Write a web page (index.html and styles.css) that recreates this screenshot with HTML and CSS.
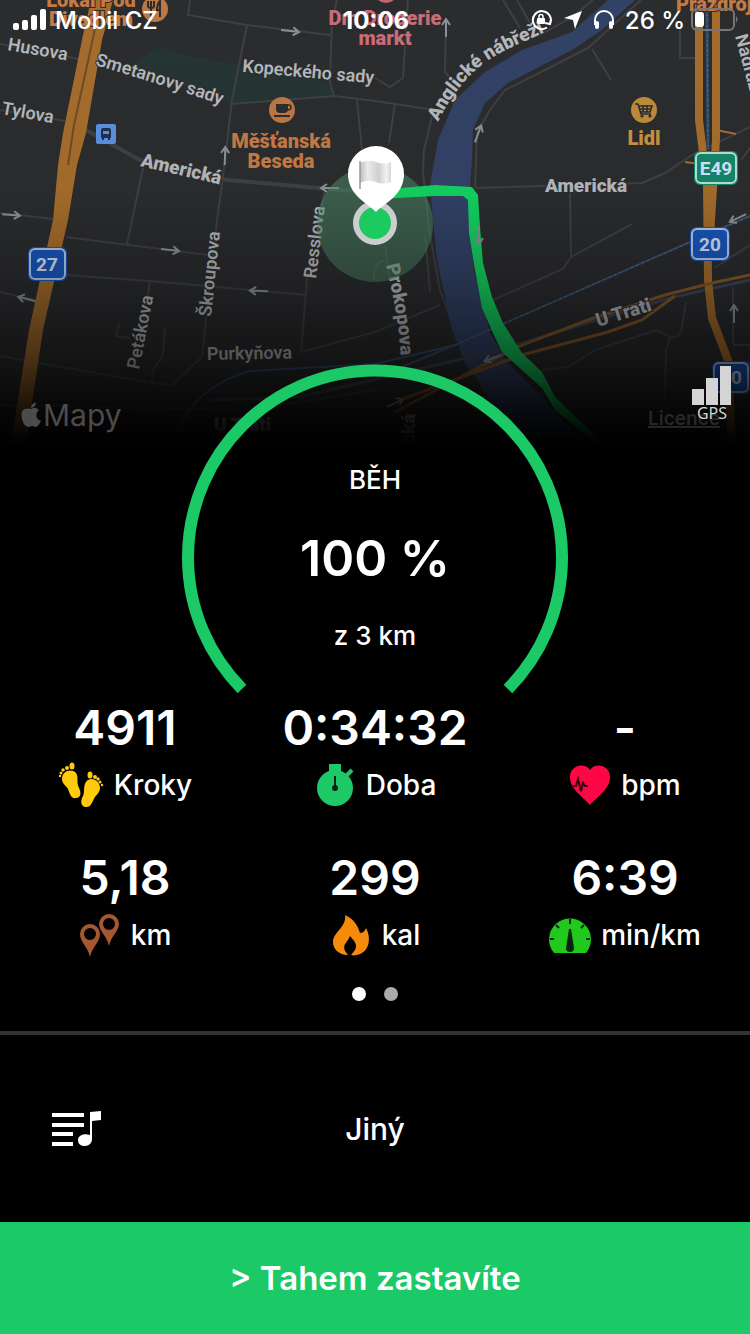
FILE: index.html
```html
<!DOCTYPE html>
<html lang="cs">
<head>
    <meta charset="utf-8">
    <meta name="viewport" content="width=device-width, initial-scale=1">
    <title>Běh</title>
    <link rel="stylesheet" href="styles.css">
</head>
<body>
    <div class="app">
        <section class="hero">
            <svg class="map" viewBox="0 0 750 450" preserveAspectRatio="xMidYMin slice" role="img" aria-label="Mapa trasy">
                <defs>
                    <linearGradient id="fade" x1="0" y1="0" x2="0" y2="1">
                        <stop offset="0" stop-color="#000" stop-opacity="0"/>
                        <stop offset="0.43" stop-color="#000" stop-opacity="0.03"/>
                        <stop offset="0.62" stop-color="#000" stop-opacity="0.24"/>
                        <stop offset="0.8" stop-color="#000" stop-opacity="0.56"/>
                        <stop offset="0.91" stop-color="#000" stop-opacity="0.84"/>
                        <stop offset="0.99" stop-color="#000"/>
                    </linearGradient>
                    <linearGradient id="flag" x1="0" y1="0" x2="1" y2="0">
                        <stop offset="0" stop-color="#bdbdbd"/>
                        <stop offset="0.25" stop-color="#ececec"/>
                        <stop offset="0.6" stop-color="#cfcfcf"/>
                        <stop offset="0.85" stop-color="#f2f2f2"/>
                        <stop offset="1" stop-color="#d5d5d5"/>
                    </linearGradient>
                    <path id="smetanovy" d="M95 65 Q160 84 240 111"/>
                    <path id="anglicke" d="M438 122 C455 88 475 66 502 52 C522 42 540 35 570 20"/>
                    <path id="prokopova" d="M386 265 C394 300 401 330 401 375"/>
                    <g id="arrow" fill="none" stroke="#8b9196" stroke-width="2">
                        <path d="M-9 0 H8 M3 -4 L9 0 L3 4"/>
                    </g>
                </defs>
                <rect width="750" height="450" fill="#2b2c2e"/>

                <!-- park -->
                <path fill="#253533" d="M130 66 L158 47 L190 56 L245 66 L330 82 L334 96 L280 99 L232 104 Z"/>

                <!-- streets -->
                <g class="streets">
                    <path d="M0 44 L84 60 M0 110 L65 121 M190 0 L188 15 L247 25 L330 35 M337 0 L332 20 L330 82 L334 96"/>
                    <path d="M247 25 L232 100 L222 185 L217 220 L202 357 L172 385 L152 383 L0 356"/>
                    <path d="M230 104 L334 96 L375 101 L428 109 M357 100 L362 150 M395 103 L389 143"/>
                    <path d="M143 168 L127 244 M0 213 L53 219 M66 237 L208 255 M66 275 L150 281 L307 295 M0 292 L35 300"/>
                    <path d="M325 190 L307 280 L301 352 L375 332 L440 305 M150 281 L144 320"/>
                    <path d="M119 323 L116 336 L130 338 M165 328 L163 355 L153 370 L152 384"/>
                    <path d="M503 0 L520 28 M517 0 L530 23 M593 0 L572 17 L540 35 M408 0 L403 78 L390 87 L375 78 M446 20 L445 72 L455 83"/>
                    <path d="M641 0 L588 48 L545 70 L505 90 L490 110 L477 133 L475 187 M592 49 L611 80 M680 30 L680 58 L695 58"/>
                    <path d="M432 117 L424 150 L423 173 L430 235 L440 290 L460 345 L485 392 M385 245 L390 280 M374 280 Q373 262 385 260 M425 235 L430 292"/>
                    <path d="M475 188 L642 183 L665 173 L692 155 L750 127 M570 192 L571 257 L563 269 L493 300 M571 257 L632 224"/>
                    <path d="M542 370 L568 367 L595 350 L657 330 L670 337 Q682 340 683 320 L686 302 M670 337 L666 350 L665 400 M733 287 L733 345 M733 345 L750 345"/>
                    <path d="M0 405 L250 410 L375 390 M714 268 L750 245 M750 148 L741 160"/>
                </g>
                <path class="avenue" d="M86 130 L140 160 L228 180 L340 190 L400 192"/>

                <!-- river -->
                <path fill="#324266" d="M608 0 L572 32 L522 50 L485 72 L455 100 L438 140 L430 185 L433 220 L437 260 L452 330 L465 363 L485 390 L518 450 L600 450 L575 433 L542 397 L508 363 L490 333 L474 270 L470 187 L472 160 L473 130 L485 103 L508 83 L572 50 L602 30 L635 0 Z"/>

                <!-- railway -->
                <g fill="none" stroke="#36506f" stroke-width="2">
                    <path d="M180 425 Q200 385 250 371 L375 364 L455 345 L690 242 L750 216"/>
                    <path d="M375 378 L455 345"/>
                    <path stroke="#3c4656" stroke-width="3" d="M210 400 L300 397 L500 350 L590 322 L670 298 L750 280"/>
                    <path stroke="#536f91" stroke-width="1" stroke-dasharray="2 4" d="M455 345 L690 242 L750 216"/>
                </g>

                <!-- main roads -->
                <path fill="#a56d2c" d="M91 0 L113 0 L102 40 L86 133 L77 165 L68 220 L43 330 L25 450 L10 450 L29 330 L53 220 L58 165 L63 133 L83 35 Z"/>
                <path class="road-gap" d="M97 20 L74 125 L68 165"/>
                <g fill="none" stroke="#a56d2c">
                    <path stroke-width="8" d="M699 0 L699 120 L707 185 L708 280 L712 318 L728 360 L732 450"/>
                    <path stroke-width="8" d="M716 0 L716 140 L711 220 L709 260"/>
                    <path stroke-width="2" d="M716 130 L736 134 M685 162 L700 164"/>
                    <path stroke="#87592a" stroke-width="3" d="M395 412 L517 347 L588 320 L665 295 L712 283 L750 275 M400 400 L522 355 L608 332 L642 320 L675 296"/>
                </g>
                <path fill="none" stroke="#344d6b" stroke-width="3" d="M707 10 L708 150"/>
                <path fill="none" stroke="#6483a0" stroke-width="1" stroke-dasharray="1 4" d="M707 10 L708 150"/>

                <!-- one-way arrows -->
                <use href="#arrow" transform="translate(290 31) rotate(6)"/>
                <use href="#arrow" transform="translate(11 215) rotate(4)"/>
                <use href="#arrow" transform="translate(170 250) rotate(6)"/>
                <use href="#arrow" transform="translate(259 291) rotate(182)"/>
                <use href="#arrow" transform="translate(27 299) rotate(194)"/>
                <use href="#arrow" transform="translate(225 156) rotate(-88)"/>
                <use href="#arrow" transform="translate(330 188) rotate(180)"/>
                <use href="#arrow" transform="translate(478 134) rotate(-70)"/>
                <use href="#arrow" transform="translate(446 28) rotate(-90)"/>
                <use href="#arrow" transform="translate(493 358) rotate(160)"/>
                <use href="#arrow" transform="translate(734 314) rotate(-90)"/>
                <use href="#arrow" transform="translate(738 218) rotate(155)"/>
                <use href="#arrow" transform="translate(395 403) rotate(-25)"/>

                <!-- street names -->
                <g class="street-name">
                    <text transform="translate(7 50) rotate(10)">Husova</text>
                    <text transform="translate(1 114) rotate(10)">Tylova</text>
                    <text><textPath href="#smetanovy">Smetanovy sady</textPath></text>
                    <text transform="translate(242 72) rotate(5)">Kopeckého sady</text>
                    <text transform="translate(211 317) rotate(-84)">Škroupova</text>
                    <text transform="translate(316 279) rotate(-83)">Resslova</text>
                    <text transform="translate(139 370) rotate(-79)">Petákova</text>
                    <text transform="translate(207 360) rotate(-1)">Purkyňova</text>
                    <text transform="translate(735 36) rotate(75)">Nádražní</text>
                </g>
                <g class="street-name strong">
                    <text transform="translate(140 166) rotate(13)">Americká</text>
                    <text x="545" y="192">Americká</text>
                    <text><textPath href="#anglicke">Anglické nábřeží</textPath></text>
                    <text><textPath href="#prokopova">Prokopova</textPath></text>
                    <text transform="translate(598 327) rotate(-17)">U Trati</text>
                    <text x="214" y="431">U Trati</text>
                    <text transform="translate(415 444) rotate(-90)">cká</text>
                </g>

                <!-- places -->
                <g class="place">
                    <text x="91" y="7">Lokál Pod</text>
                    <text x="91" y="26">Divadlem</text>
                    <text x="281" y="148">Měšťanská</text>
                    <text x="281" y="168">Beseda</text>
                    <text x="714" y="11">Prazdroj</text>
                    <text class="shop" x="644" y="145">Lidl</text>
                    <text class="beauty" x="385" y="25">Dm Drogerie</text>
                    <text class="beauty" x="385" y="45">markt</text>
                </g>
                <circle cx="386" cy="-9" r="12" fill="#bf6871"/>
                <circle cx="155" cy="9" r="13" fill="#bd7744"/>
                <path d="M151 1 V17 M148 1 V6 Q148 8 151 8 Q154 8 154 6 V1 M160 17 V1 Q157 4 157 10 H160" fill="none" stroke="#2b2c2e" stroke-width="2"/>
                <circle cx="282" cy="110" r="13" fill="#bd7744"/>
                <path d="M276 104 H288 V109 Q288 113 284 113 H280 Q276 113 276 109 Z M274 115 H290 V117 H274 Z" fill="#2b2c2e"/>
                <path d="M288 105 H289 Q291 105 291 107 Q291 110 287 110" fill="none" stroke="#2b2c2e" stroke-width="1.5"/>
                <circle cx="644" cy="110" r="13" fill="#be8b3b"/>
                <path d="M635 104 H638 L641 114 H651 M639 106 H652 L650 112 H641 M643 105 V112 M647 105 V112 M640 109 H651" fill="none" stroke="#2b2c2e" stroke-width="1.6"/>
                <circle cx="642" cy="116" r="1.6" fill="#2b2c2e"/>
                <circle cx="650" cy="116" r="1.6" fill="#2b2c2e"/>
                <rect x="96" y="124" width="20" height="20" rx="2" fill="#5990df"/>
                <path d="M103 128 H109 Q111 128 111 130 V138 H110 V140 H108 V138 H104 V140 H102 V138 H101 V130 Q101 128 103 128 Z" fill="#20324c"/>
                <path d="M103 131 H109 V134 H103 Z" fill="#5990df"/>

                <!-- road shields -->
                <g class="shield">
                    <rect class="edge" x="28" y="247" width="39" height="34" rx="6"/>
                    <rect x="30" y="249" width="35" height="30" rx="5"/>
                    <text x="47" y="271">27</text>
                    <rect class="edge" x="690" y="227" width="40" height="34" rx="6"/>
                    <rect x="692" y="229" width="36" height="30" rx="5"/>
                    <text x="710" y="251">20</text>
                    <rect class="edge" x="712" y="361" width="40" height="33" rx="6"/>
                    <rect x="714" y="363" width="34" height="29" rx="5"/>
                    <text x="731" y="384">20</text>
                    <rect class="euro edge" x="694" y="151" width="44" height="34" rx="6"/>
                    <rect class="euro" x="696" y="153" width="40" height="30" rx="5"/>
                    <text x="716" y="175">E49</text>
                </g>

                <!-- run route -->
                <circle cx="375" cy="224" r="58" fill="#4f8f6b" fill-opacity="0.5"/>
                <path fill="#14d160" d="M380 190 L435 185 L472 187 L478 195 L480 227 L483 263 L492 297 L503 323 L522 353 L542 372 L555 397 L582 423 L602 443 L592 440 L555 410 L542 388 L522 370 L502 352 L493 333 L482 308 L475 270 L469 233 L468 200 L463 196 L435 196 L380 199 Z"/>
                <use href="#arrow" transform="translate(479 235) rotate(90)"/>

                <rect width="750" height="450" fill="url(#fade)"/>

                <circle cx="375" cy="223" r="19" fill="#1dca60" stroke="#cdcdcf" stroke-width="6"/>
                <path fill="#fff" d="M376 212 C369 204 348 196 348 174 A28 28 0 0 1 404 174 C404 196 383 204 376 212 Z"/>
                <path fill="url(#flag)" d="M360 163 Q368 159 376 162 T391 162 V182 Q384 185 376 182 T360 183 Z"/>
                <path d="M360 161 V189" stroke="#999" stroke-width="1.5"/>

                <!-- attribution -->
                <g fill="#4b4b4b">
                    <path d="M36 402 Q36 407 31 408 Q31 404 36 402 Z M31 409 Q35 406 39 410 Q35 413 37 418 Q38 420 41 421 Q38 427 35 427 Q32 425 29 427 Q24 427 22 419 Q20 410 25 409 Q28 408 31 409 Z"/>
                    <text class="apple" x="43" y="426">Mapy</text>
                </g>
                <a href="#licence"><text class="licence" x="648" y="425">Licence</text></a>
            </svg>

            <div class="gps">
                <svg width="40" height="39" viewBox="0 0 40 39" aria-hidden="true">
                    <path fill="#d4d4d4" d="M0 23 H12 V39 H0 Z M14 12 H26 V39 H14 Z M28 0 H39 V39 H28 Z"/>
                </svg>
                <span>GPS</span>
            </div>

            <div class="hero-content">
                <header class="status-bar">
                    <div class="status-left">
                        <svg width="34" height="22" viewBox="0 0 34 22" fill="#fff" aria-hidden="true">
                            <rect x="0" y="14" width="6" height="7" rx="2"/>
                            <rect x="9" y="11" width="6" height="10" rx="2"/>
                            <rect x="18" y="6" width="6" height="15" rx="2"/>
                            <rect x="27" y="0" width="6" height="21" rx="2"/>
                        </svg>
                        <span>Mobil CZ</span>
                    </div>
                    <time class="clock">10:06</time>
                    <div class="status-right">
                        <svg width="22" height="22" viewBox="0 0 22 22" aria-hidden="true">
                            <path d="M16 18.500 A9 9 0 1 1 19 15 M20 10 L19 15 L14 14" fill="none" stroke="#fff" stroke-width="2"/>
                            <rect x="6" y="9" width="8" height="6" rx="1" fill="#fff"/>
                            <path d="M8 9 V7.500 A2 2 0 0 1 12 7.500 V9" fill="none" stroke="#fff" stroke-width="1.500"/>
                        </svg>
                        <svg width="20" height="20" viewBox="0 0 20 20" aria-hidden="true">
                            <path d="M19 1 L12 19 L10 10 L1 8 Z" fill="#fff"/>
                        </svg>
                        <svg width="22" height="20" viewBox="0 0 22 20" aria-hidden="true">
                            <path d="M2 15 V10 A9 9 0 0 1 20 10 V15" fill="none" stroke="#fff" stroke-width="2"/>
                            <rect x="2" y="11" width="4" height="8" rx="2" fill="#fff"/>
                            <rect x="16" y="11" width="4" height="8" rx="2" fill="#fff"/>
                        </svg>
                        <span>26 %</span>
                        <svg width="48" height="24" viewBox="0 0 48 24" aria-hidden="true">
                            <rect x="1" y="1" width="42" height="21" rx="5" fill="none" stroke="#767676" stroke-width="2"/>
                            <rect x="4" y="4" width="9" height="15" rx="3" fill="#fff"/>
                            <path d="M45 8 Q48 11 45 15 Z" fill="#767676"/>
                        </svg>
                    </div>
                </header>

                <div class="goal">
                    <svg class="ring" viewBox="0 0 388 332" aria-hidden="true">
                        <path d="M61 325 A187 187 0 1 1 327 325" fill="none" stroke="#1bc966" stroke-width="12"/>
                    </svg>
                    <div class="goal-text">
                        <h1>BĚH</h1>
                        <p class="percent">100 %</p>
                        <p class="target">z 3 km</p>
                    </div>
                </div>
            </div>
        </section>

        <section class="stats">
            <div class="stat">
                <div class="value">4911</div>
                <div class="unit">
                    <svg width="46" height="46" viewBox="0 0 46 46" fill="#ffcb0c" aria-hidden="true">
                        <path d="M4 17 C4 9 13 6 18 11 C21 15 18 20 21 26 C24 32 22 36 18 36 C13 37 12 32 10 27 C8 23 4 22 4 17 Z"/>
                        <ellipse cx="14" cy="4" rx="2.500" ry="3.500"/>
                        <circle cx="9" cy="6" r="2"/>
                        <circle cx="5" cy="8" r="1.700"/>
                        <circle cx="3" cy="11" r="1.500"/>
                        <circle cx="2" cy="14" r="1.200"/>
                        <path d="M42 26 C42 18 32 14 28 20 C25 24 27 30 25 34 C22 39 23 44 27 45 C33 46 34 40 37 35 C39 32 42 30 42 26 Z"/>
                        <ellipse cx="32" cy="13" rx="2.500" ry="3.500"/>
                        <circle cx="37" cy="15" r="2"/>
                        <circle cx="40" cy="17" r="1.700"/>
                        <circle cx="42" cy="20" r="1.500"/>
                        <circle cx="44" cy="23" r="1.200"/>
                    </svg>
                    <span>Kroky</span>
                </div>
            </div>
            <div class="stat">
                <div class="value">0:34:32</div>
                <div class="unit">
                    <svg width="42" height="44" viewBox="-3 0 42 44" aria-hidden="true">
                        <path fill="#1dc967" d="M12 1 H24 V8 H12 Z"/>
                        <circle cx="18" cy="25" r="18" fill="#1dc967"/>
                        <path d="M29 13 L35 7" stroke="#1dc967" stroke-width="4"/>
                        <path d="M18 13 V25" stroke="#06240f" stroke-width="2"/>
                        <circle cx="18" cy="25" r="3" fill="#06240f"/>
                    </svg>
                    <span>Doba</span>
                </div>
            </div>
            <div class="stat">
                <div class="value">-</div>
                <div class="unit">
                    <svg width="42" height="42" viewBox="0 0 42 42" aria-hidden="true">
                        <path fill="#ff0645" d="M21 41 C13 32 1 25 1 13 C1 1 16 -2 21 6 C26 -2 41 1 41 13 C41 25 29 32 21 41 Z"/>
                        <path d="M4 22 H7 L9 15 L12 27 L14 19 L16 22 H19" fill="none" stroke="#3a0010" stroke-width="2"/>
                    </svg>
                    <span>bpm</span>
                </div>
            </div>
            <div class="stat">
                <div class="value">5,18</div>
                <div class="unit">
                    <svg width="42" height="44" viewBox="0 0 42 44" fill="#a45731" fill-rule="evenodd" aria-hidden="true">
                        <path d="M11 44 C9 34 1 29 1 21 A10 10 0 0 1 21 21 C21 29 13 34 11 44 Z M11 15 A6 6 0 1 0 11 27 A6 6 0 1 0 11 15 Z"/>
                        <path d="M30 33 C28 23 20 18 20 11 A10 10 0 0 1 40 11 C40 18 32 23 30 33 Z M30 5 A6 6 0 1 0 30 17 A6 6 0 1 0 30 5 Z"/>
                    </svg>
                    <span>km</span>
                </div>
            </div>
            <div class="stat">
                <div class="value">299</div>
                <div class="unit">
                    <svg width="42" height="42" viewBox="-2 0 42 42" aria-hidden="true">
                        <path fill="#f68b0b" d="M13 1 C22 5 26 12 28 19 C31 19 33 17 34 14 C39 23 38 36 28 40 C25 41 22 42 19 41 L23 36 C26 30 22 27 18 22 C16 28 10 30 13 37 L16 41 C7 41 1 35 1 28 C1 18 15 13 13 1 Z"/>
                    </svg>
                    <span>kal</span>
                </div>
            </div>
            <div class="stat">
                <div class="value">6:39</div>
                <div class="unit">
                    <svg width="42" height="36" viewBox="0 0 42 36" aria-hidden="true">
                        <path fill="#20c91c" d="M5 36 A21 21 0 1 1 37 36 Z"/>
                        <path d="M21 2 V7 M7 8 L10 11 M35 8 L32 11 M1 22 H5 M41 22 H37" stroke="#06240f" stroke-width="2"/>
                        <path fill="#06240f" d="M20 12 H22 L25 31 A4 4 0 1 1 17 31 Z"/>
                    </svg>
                    <span>min/km</span>
                </div>
            </div>
        </section>

        <div class="pager">
            <span class="dot active"></span>
            <span class="dot"></span>
        </div>

        <section class="music">
            <button type="button" class="playlist" aria-label="Hudba">
                <svg width="50" height="36" viewBox="0 0 50 36" fill="#fff" aria-hidden="true">
                    <path d="M0 2 H32 V6 H0 Z M0 12 H32 V16 H0 Z M0 21 H21 V25 H0 Z M0 31 H21 V35 H0 Z"/>
                    <path d="M38 1 L49 0 V9 L40 10 V28 C40 32 37 35 33 35 C29 35 26 33 26 29 C26 25 31 22 38 24 Z"/>
                </svg>
            </button>
            <span class="music-name">Jiný</span>
        </section>

        <button type="button" class="stop">&gt; Tahem zastavíte</button>
    </div>
</body>
</html>
```
FILE: styles.css
```css
* {
    box-sizing: border-box;
}

body {
    margin: 0;
    background-color: #000;
    color: #fff;
    font-family: Inter, "Liberation Sans", sans-serif;
    font-weight: 500;
}

h1, p {
    margin: 0;
}

button {
    border: 0;
    font: inherit;
    color: inherit;
    cursor: pointer;
}

svg {
    display: block;
}

.app {
    display: flex;
    flex-direction: column;
    min-height: 100vh;
}

/* map and goal ring */
.hero {
    position: relative;
    display: grid;
}

.map, .hero-content {
    grid-area: 1 / 1;
}

.map {
    width: 100%;
    height: 450px;
}

.hero-content {
    position: relative;
}

.streets {
    fill: none;
    stroke: #3e4043;
    stroke-width: 2;
}

.avenue {
    fill: none;
    stroke: #3e4043;
    stroke-width: 4;
}

.road-gap {
    fill: none;
    stroke: #6f4c26;
    stroke-width: 2;
}

.map text {
    font-family: Roboto, "Noto Sans", sans-serif;
    paint-order: stroke;
    stroke: #2b2c2e;
    stroke-width: 2px;
}

.street-name {
    font-size: 18px;
    font-weight: 600;
    fill: #b4b7bb;
}

.map .strong {
    font-size: 19px;
    font-weight: 900;
}

.place {
    font-size: 20px;
    font-weight: 900;
    fill: #c57a43;
    text-anchor: middle;
}

.place .shop {
    fill: #c8923d;
}

.place .beauty {
    fill: #c96d78;
}

.shield {
    font-size: 19px;
    font-weight: 700;
    fill: #d5e2f8;
    text-anchor: middle;
}

.shield rect {
    fill: #1857bd;
    stroke: #b5cbef;
    stroke-width: 2px;
}

.shield .euro {
    fill: #14866a;
    stroke: #b6e0d3;
}

.shield .edge {
    stroke: none;
}

.map .shield text {
    stroke: none;
}

.map .apple {
    font-family: Inter, sans-serif;
    font-size: 30px;
    font-weight: 400;
    stroke: none;
}

.map .licence {
    font-family: Inter, sans-serif;
    font-size: 19px;
    font-weight: 600;
    fill: #272727;
    stroke: none;
    text-decoration: underline;
}

.gps {
    position: absolute;
    top: 366px;
    right: 18px;
    display: flex;
    flex-direction: column;
    align-items: center;
    font-family: "Noto Sans", sans-serif;
    font-size: 16px;
    font-weight: 400;
    line-height: 16px;
    color: #d4d4d4;
}

.status-bar {
    display: grid;
    grid-template-columns: 1fr auto 1fr;
    align-items: center;
    height: 40px;
    padding: 0 11px 0 13px;
    font-size: 24px;
}

.status-left, .status-right {
    display: flex;
    align-items: center;
    gap: 8px;
}

.status-right {
    justify-content: flex-end;
    gap: 10px;
}

.status-right span {
    white-space: nowrap;
}

.status-right span + svg {
    margin-left: -4px;
}

.clock {
    font-weight: 700;
}

.goal {
    display: grid;
    justify-content: center;
    margin-top: 324px;
}

.ring, .goal-text {
    grid-area: 1 / 1;
}

.ring {
    width: 388px;
    height: 332px;
}

.goal-text {
    display: flex;
    flex-direction: column;
    align-items: center;
    gap: 32px;
    padding-top: 100px;
}

.goal-text h1, .target {
    font-size: 26px;
    font-weight: 500;
    line-height: 32px;
}

.percent {
    font-size: 50px;
    font-weight: 600;
    line-height: 60px;
}

/* workout numbers */
.stats {
    display: grid;
    grid-template-columns: repeat(3, 1fr);
    row-gap: 44px;
    padding-top: 4px;
}

.value {
    font-size: 48px;
    font-weight: 600;
    line-height: 56px;
    text-align: center;
}

.unit {
    display: flex;
    align-items: center;
    justify-content: center;
    gap: 10px;
    height: 42px;
    margin-top: 8px;
    font-size: 28px;
}

.pager {
    display: flex;
    justify-content: center;
    gap: 18px;
    padding: 31px 0 30px;
    border-bottom: 4px solid #333;
}

.dot {
    width: 14px;
    height: 14px;
    border-radius: 50%;
    background-color: #aaa;
}

.active {
    background-color: #fff;
}

.music {
    flex: 1;
    display: grid;
    grid-template-columns: 1fr auto 1fr;
    align-items: center;
    min-height: 120px;
    padding: 0 52px;
    font-size: 30px;
}

.playlist {
    justify-self: start;
    padding: 0;
    background: none;
}

.stop {
    min-height: 112px;
    background-color: #1bc966;
    font-size: 33px;
    font-weight: 600;
}
```
